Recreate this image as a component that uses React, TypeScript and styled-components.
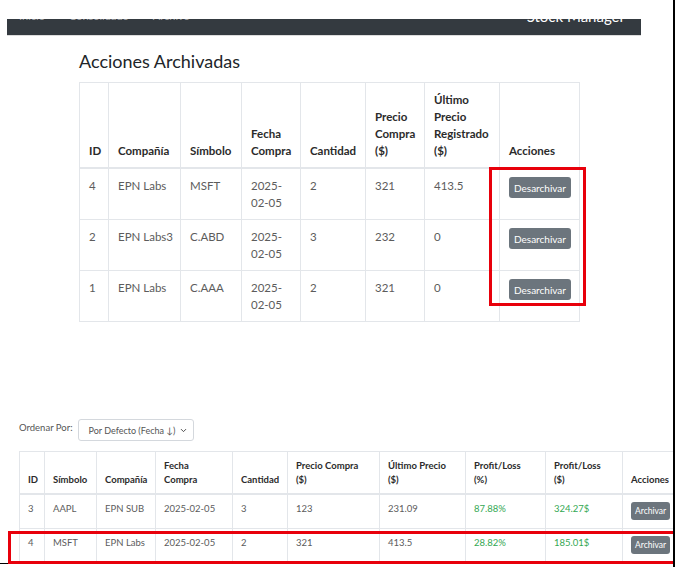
import React from 'react'
import styled, { createGlobalStyle } from 'styled-components'
import { ChevronDown } from 'lucide-react'

const GlobalStyle = createGlobalStyle`
  html, body {
    margin: 0;
    padding: 0;
    background: #fff;
    overflow: hidden;
  }
  body {
    font-family: Lato, 'Liberation Sans', sans-serif;
    color: #212529;
  }
`

const Frame = styled.div`
  width: 675px;
  height: 567px;
  border-right: 2px solid #000;
  box-sizing: border-box;
  overflow: hidden;
`

const TopBar = styled.div`
  padding: 19px 0 0 7px;
`

const NavClip = styled.div`
  width: 634px;
  height: 16px;
  overflow: hidden;
  background: #343a40;
  border-bottom: 1px solid #dcdcdc;
`

const NavInner = styled.nav`
  display: flex;
  align-items: center;
  height: 30px;
  margin-top: -19px;
  padding: 0 16px 0 12px;
`

const NavLink = styled.span`
  font-size: 11px;
  color: rgba(255, 255, 255, 0.55);
  margin-right: 24px;
`

const Brand = styled.span`
  margin-left: auto;
  font-size: 15px;
  color: #fff;
  margin-top: 1px;
`

const ArchivedSection = styled.section`
  padding: 14px 0 0 79px;
`

const Title = styled.h2`
  margin: 0 0 10px;
  font-size: 18px;
  line-height: 22px;
  font-weight: 400;
  color: #212529;
`

const TableWrap = styled.div<{ w: number }>`
  position: relative;
  width: ${(p) => p.w}px;
`

const Table = styled.table<{ small?: boolean }>`
  width: 100%;
  table-layout: fixed;
  border-collapse: collapse;
  font-size: ${(p) => (p.small ? '9.5px' : '11.5px')};
  line-height: ${(p) => (p.small ? '14px' : '17px')};

  th,
  td {
    border: 1px solid #e3e6ea;
    padding: ${(p) => (p.small ? '7.5px 8px' : '8px 9px')};
    text-align: left;
    white-space: nowrap;
  }
  th {
    vertical-align: bottom;
    font-weight: 700;
    color: #2b2b2b;
    border-bottom: 2px solid #e3e6ea;
    padding-top: ${(p) => (p.small ? '6.5px' : '8px')};
    padding-bottom: ${(p) => (p.small ? '6px' : '8px')};
  }
  td {
    vertical-align: top;
    color: #5c5c5c;
  }
`

const Gain = styled.td`
  && {
    color: #34a853;
  }
`

const Button = styled.button<{ small?: boolean }>`
  display: block;
  border: 0;
  border-radius: 3px;
  background: #6c757d;
  color: #fff;
  font-family: Lato, 'Liberation Sans', sans-serif;
  font-size: ${(p) => (p.small ? '8.5px' : '10px')};
  height: ${(p) => (p.small ? '18px' : '21px')};
  padding: 0 ${(p) => (p.small ? '4px' : '5px')};
  cursor: pointer;
`

const RedBox = styled.div<{ l: number; t: number; w: number; h: number }>`
  position: absolute;
  left: ${(p) => p.l}px;
  top: ${(p) => p.t}px;
  width: ${(p) => p.w}px;
  height: ${(p) => p.h}px;
  border: 3px solid #e8000b;
  box-sizing: border-box;
  pointer-events: none;
`

const LowerSection = styled.section`
  margin-top: 97px;
  padding-left: 19px;
  border-bottom: 1px solid #000;
`

const SortRow = styled.div`
  display: flex;
  align-items: flex-start;
  gap: 5px;
  margin-bottom: 10px;
  font-size: 9.5px;
  color: #555;
`

const SortLabel = styled.span`
  margin-top: 3px;
`

const SelectBox = styled.div`
  display: flex;
  align-items: center;
  justify-content: space-between;
  width: 116px;
  height: 22px;
  box-sizing: border-box;
  padding: 0 5px 0 10px;
  border: 1px solid #d4d8dd;
  border-radius: 3px;
  color: #555;
  font-size: 9px;
  white-space: nowrap;
`

const archived = [
  { id: 4, company: 'EPN Labs', symbol: 'MSFT', qty: 2, buy: '321', last: '413.5' },
  { id: 2, company: 'EPN Labs3', symbol: 'C.ABD', qty: 3, buy: '232', last: '0' },
  { id: 1, company: 'EPN Labs', symbol: 'C.AAA', qty: 2, buy: '321', last: '0' },
]

const active = [
  { id: 3, symbol: 'AAPL', company: 'EPN SUB', date: '2025-02-05', qty: 3, buy: '123', last: '231.09', pct: '87.88%', usd: '324.27$' },
  { id: 4, symbol: 'MSFT', company: 'EPN Labs', date: '2025-02-05', qty: 2, buy: '321', last: '413.5', pct: '28.82%', usd: '185.01$' },
]

const archivedCols = [29, 72, 61, 59, 65, 59, 75, 80]
const activeCols = [25, 52, 59, 77, 55, 92, 86, 80, 77, 53]

export default function App() {
  return (
    <Frame>
      <GlobalStyle />
      <TopBar>
        <NavClip>
          <NavInner>
            <NavLink>Inicio</NavLink>
            <NavLink>Consolidado</NavLink>
            <NavLink>Archivo</NavLink>
            <Brand>Stock Manager</Brand>
          </NavInner>
        </NavClip>
      </TopBar>

      <ArchivedSection>
        <Title>Acciones Archivadas</Title>
        <TableWrap w={500}>
          <Table>
            <colgroup>
              {archivedCols.map((w, i) => (
                <col key={i} style={{ width: w }} />
              ))}
            </colgroup>
            <thead>
              <tr>
                <th>ID</th>
                <th>Compañía</th>
                <th>Símbolo</th>
                <th>Fecha<br />Compra</th>
                <th>Cantidad</th>
                <th>Precio<br />Compra<br />($)</th>
                <th>Último<br />Precio<br />Registrado<br />($)</th>
                <th>Acciones</th>
              </tr>
            </thead>
            <tbody>
              {archived.map((r) => (
                <tr key={r.id}>
                  <td>{r.id}</td>
                  <td>{r.company}</td>
                  <td>{r.symbol}</td>
                  <td>2025-<br />02-05</td>
                  <td>{r.qty}</td>
                  <td>{r.buy}</td>
                  <td>{r.last}</td>
                  <td>
                    <Button>Desarchivar</Button>
                  </td>
                </tr>
              ))}
            </tbody>
          </Table>
          <RedBox l={410} t={85} w={97} h={139} />
        </TableWrap>
      </ArchivedSection>

      <LowerSection>
        <SortRow>
          <SortLabel>Ordenar Por:</SortLabel>
          <SelectBox>
            <span>Por Defecto (Fecha ↓)</span>
            <ChevronDown size={9} strokeWidth={2.5} color="#444" />
          </SelectBox>
        </SortRow>
        <TableWrap w={656}>
          <Table small>
            <colgroup>
              {activeCols.map((w, i) => (
                <col key={i} style={{ width: w }} />
              ))}
            </colgroup>
            <thead>
              <tr>
                <th>ID</th>
                <th>Símbolo</th>
                <th>Compañía</th>
                <th>Fecha<br />Compra</th>
                <th>Cantidad</th>
                <th>Precio Compra<br />($)</th>
                <th>Último Precio<br />($)</th>
                <th>Profit/Loss<br />(%)</th>
                <th>Profit/Loss<br />($)</th>
                <th>Acciones</th>
              </tr>
            </thead>
            <tbody>
              {active.map((r) => (
                <tr key={r.id}>
                  <td>{r.id}</td>
                  <td>{r.symbol}</td>
                  <td>{r.company}</td>
                  <td>{r.date}</td>
                  <td>{r.qty}</td>
                  <td>{r.buy}</td>
                  <td>{r.last}</td>
                  <Gain>{r.pct}</Gain>
                  <Gain>{r.usd}</Gain>
                  <td>
                    <Button small>Archivar</Button>
                  </td>
                </tr>
              ))}
            </tbody>
          </Table>
          <RedBox l={-11} t={80} w={668} h={33} />
        </TableWrap>
      </LowerSection>
    </Frame>
  )
}
